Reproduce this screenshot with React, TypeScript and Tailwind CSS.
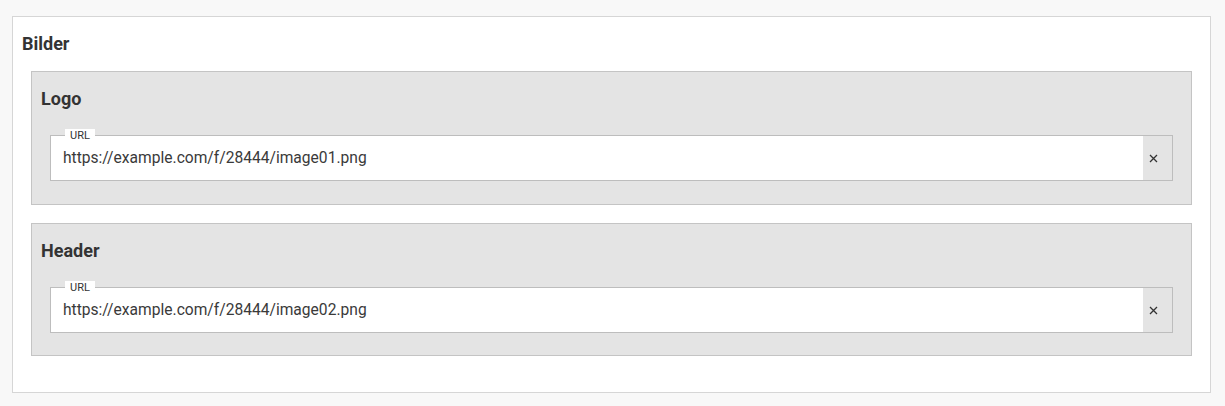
const IMAGES = [
  { title: "Logo", url: "https://example.com/f/28444/image01.png", pad: "pb-[23px]" },
  { title: "Header", url: "https://example.com/f/28444/image02.png", pad: "pb-[22px]" },
];

function UrlField({ value }: { value: string }) {
  return (
    <div className="relative mt-[9px] flex h-[46px] border border-[#bdbdbd] bg-white">
      <span className="absolute left-[14px] top-[-7px] bg-white px-[5px] text-[11px] leading-[13px] text-[#333]">
        URL
      </span>
      <div className="flex flex-1 items-center pl-3 pt-px text-[15.6px] text-[#3a3a3a]">{value}</div>
      <button type="button" className="flex w-[29px] items-center justify-start bg-[#e4e4e4] pl-[6px]">
        <svg width="9" height="9" viewBox="0 0 9 9">
          <path d="M1 1 L8 8 M8 1 L1 8" stroke="#333" strokeWidth="1.3" />
        </svg>
      </button>
    </div>
  );
}

export default function App() {
  return (
    <div className="min-h-[406px] bg-[#f8f8f8] pt-4 font-['Roboto',sans-serif]">
      <div className="ml-3 w-[1199px] border border-[#d6d6d6] bg-white px-[18px] pb-9">
        <h2 className="ml-[-18px] flex h-[54px] items-center pb-[2px] pl-[9px] text-[18px] font-bold text-[#333]">
          Bilder
        </h2>
        <div className="flex flex-col gap-[18px]">
          {IMAGES.map((img) => (
            <section
              key={img.title}
              className={"border border-[#c4c4c4] bg-[#e4e4e4] px-[18px] " + img.pad}
            >
              <h3 className="ml-[-18px] flex h-[54px] items-center pb-[2px] pl-[9px] text-[18px] font-bold text-[#333]">
                {img.title}
              </h3>
              <UrlField value={img.url} />
            </section>
          ))}
        </div>
      </div>
    </div>
  );
}
